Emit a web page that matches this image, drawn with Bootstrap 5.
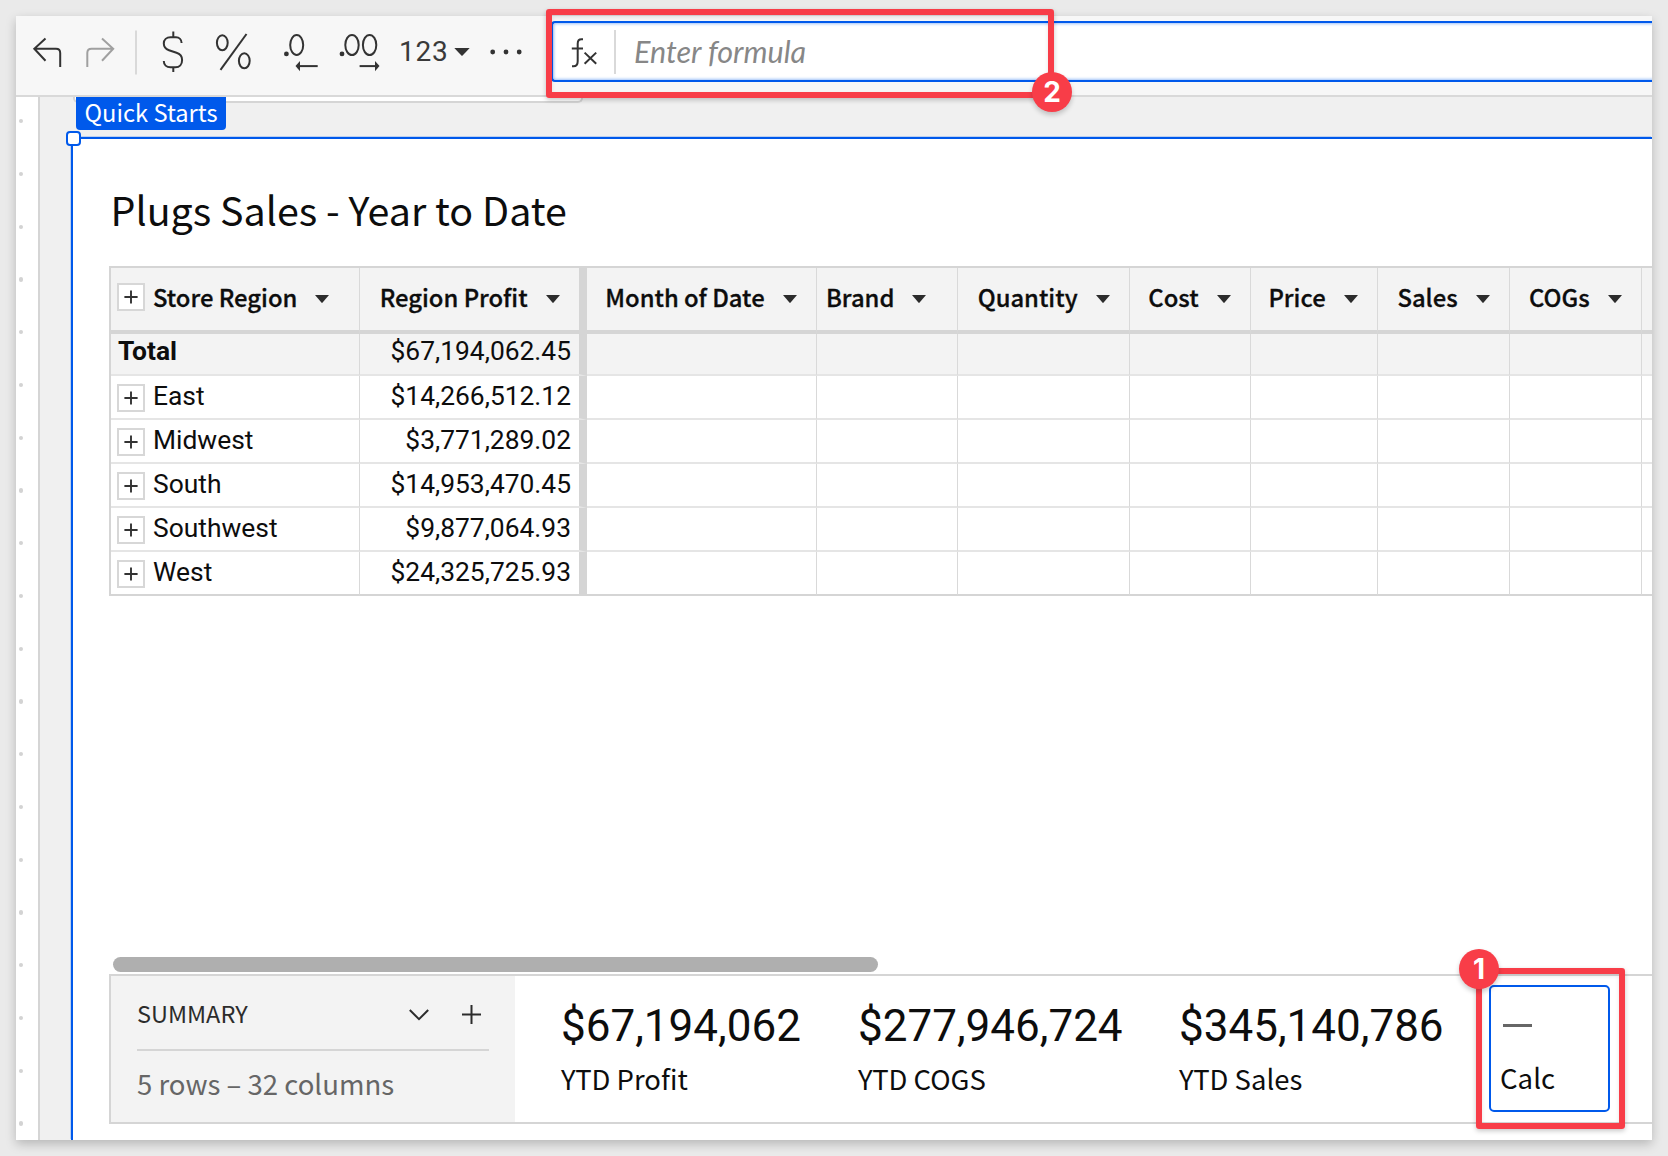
<!DOCTYPE html>
<html lang="en">
<head>
<meta charset="utf-8">
<meta name="viewport" content="width=device-width, initial-scale=1">
<title>Plugs Sales - Year to Date</title>
<link href="https://cdn.jsdelivr.net/npm/bootstrap@5.3.0/dist/css/bootstrap.min.css" rel="stylesheet">
<style>
  :root { --line: #d5d5d5; --blue: #0059eb; --red: #f83d48; --soft: #f3f3f3; }
  body { background: #eaeaea; height: 1156px; padding: 16px; overflow: hidden; color: #0d0d0d;
    font-family: "Noto Sans CJK SC", sans-serif; font-size: 27.5px; line-height: 40px; }
  .app { width: 1636px; height: 1124px; background: #f0f0f0; box-shadow: 0 4px 10px rgba(0,0,0,.22); }
  .clip { overflow: hidden; }
  .num { font-family: Roboto, sans-serif; }
  svg { display: block; flex: none; }

  /* toolbar */
  .toolbar { height: 81px; background: #f7f7f7; border-bottom: 2px solid #d9d9d9; padding-top: 5px; }
  .tools { width: 535px; height: 61px; padding-left: 16px; }
  .fmt { font-size: 28px; letter-spacing: .8px; color: #3a3a3a; margin-left: 18px; line-height: 40px; }
  .fmt-caret { margin-left: 5px; }
  .more { margin-left: 20px; }
  .vr-line { width: 2px; height: 44px; background: #d9d9d9; margin-left: 15px; }
  .formula { height: 61px; background: #fff; border: 2px solid var(--blue); border-right: 0; margin-right: -8px;
    border-radius: 4px 0 0 4px; box-shadow: inset 0 0 3px 1px #9cc0f8; padding-left: 18px; }
  .formula input { border: 0; outline: 0; background: transparent; padding: 0; height: 44px; width: 600px;
    margin: 0 0 2px 18px; font: italic 30.5px/44px "Source Sans Pro", Lato, sans-serif; }
  .formula input::placeholder { color: #878787; opacity: 1; }

  /* canvas */
  .ruler { width: 24px; height: 1043px; background: #fff; border-right: 2px solid var(--line); padding: 22px 0 0 2.6px; }
  .ruler i { display: block; width: 4.4px; height: 4.4px; border-radius: 50%; background: #d3d3d3; margin-bottom: 48.37px; }
  .board { padding-left: 31px; }
  .strip { height: 40px; }
  .prev { left: 2px; top: 0; width: 510px; height: 6px; background: #fff; border: 2px solid var(--line); border-top: 0; border-radius: 0 0 5px 5px; }
  .tag { left: 5px; top: 0; width: 150px; height: 33px; background: var(--blue); color: #fff; font-size: 23.7px;
    line-height: 30px; padding-left: 8.5px; border-radius: 0 0 4px 4px; }
  .frame { border: 2px solid var(--blue); border-width: 2px 0 0 2px; background: #fff; padding-left: 36px; height: 1003px;
    box-shadow: -1px -1px 0 #bcd0f0; }
  .handle { left: -7px; top: -8px; width: 15px; height: 15px; border: 2px solid var(--blue); border-radius: 4px; background: #fff; }
  .sheet-title { font-size: 39.4px; font-weight: 400; line-height: 60px; margin: 0; padding: 40px 0 27px 1.6px; }

  /* pivot table */
  .pivot { table-layout: fixed; width: 1543px; border-collapse: separate; border-spacing: 0;
    border-left: 2px solid var(--line); border-top: 2px solid var(--line); }
  .pivot th, .pivot td { padding: 0; border-right: 1px solid #d9d9d9; }
  .pivot tr > :nth-child(2) { border-right: 8px solid var(--line); }
  .pivot tr > :last-child { border-right: 0; }
  .pivot th { height: 66px; border-bottom: 4px solid var(--line); background: var(--soft); font-size: 23.8px; font-weight: 500; -webkit-text-stroke: .3px #0d0d0d; }
  .pivot th .lbl { line-height: 36px; padding-bottom: 4px; }
  .hd { height: 62px; padding-right: 19.4px; gap: 18px; }
  .pivot td { height: 44px; border-bottom: 2px solid #e5e5e5; background: #fff; font-size: 26.4px; line-height: 36px; }
  .pivot .sum td { height: 42px; background: var(--soft); }
  .pivot .sum .total { padding: 0 0 5px 7px; font-weight: 700; }
  .pivot .last-row td { border-bottom-color: var(--line); }
  .pivot td .lbl { padding-bottom: 2px; }
  .pivot .amt { text-align: right; padding: 0 8px 2px 0; }
  .pivot .sum .amt { padding-bottom: 5px; line-height: 35px; }
  .pivot .sum .total { line-height: 35px; }
  .plus { width: 28px; height: 28px; margin: 1px 8px 0 6px; background: #fff; border: 2px solid #d7d7d7; flex: none; }
  .pivot th .plus { margin: 0 -10px 4px 6px; }
  .brand { padding-left: 9px; }

  .scroll-thumb { width: 765px; height: 15px; border-radius: 7.5px; background: #afafaf; margin: 361px 0 2px 4px; }

  /* summary bar */
  .summary { height: 150px; border: 2px solid var(--line); border-right: 0; background: #fff; }
  .side { width: 404px; background: var(--soft); padding: 17px 26px 0 26px; }
  .side-head { height: 58px; border-bottom: 2px solid var(--line); font-size: 23.5px; color: #2c2c2c; padding-right: 8.5px; }
  .side-note { color: #666; font-size: 27.55px; padding-top: 12px; }
  .add { margin: 12px 0 0 33px; }
  .kpi { padding-top: 24px; }
  .kpi .val { font-size: 44px; line-height: 52px; }
  .kpi .cap { font-size: 27.45px; line-height: 40px; padding-top: 6px; }
  .k1 { margin-left: 46px; width: 297px; }
  .k2 { width: 321px; }
  .k3 { width: 310px; }
  .calc { width: 121px; height: 127px; margin-top: 9px; border: 2px solid var(--blue); border-radius: 5px; padding: 36.5px 0 0 11px; }
  .dash { width: 29px; height: 3.5px; background: #666; margin-left: 1px; }
  .calc .cap { font-size: 27.6px; line-height: 40px; margin-top: 30px; margin-left: -2px; }

  /* annotation marks */
  .mark-box { border: 6px solid var(--red); border-radius: 3px; box-shadow: 0 2px 5px rgba(0,0,0,.22), inset 0 2px 4px rgba(0,0,0,.1); z-index: 5; }
  .mark-dot { width: 40px; height: 40px; border-radius: 50%; background: var(--red); color: #fff; z-index: 6;
    font: 700 28px/40px Inter, sans-serif; text-align: center; box-shadow: 0 3px 5px rgba(0,0,0,.2); }
  .m2 { left: 546px; top: 9px; width: 508px; height: 89px; }
  .d2 { left: 1032px; top: 72px; }
  .m1 { left: 1476px; top: 968px; width: 149px; height: 161px; }
  .d1 { left: 1459px; top: 949px; }
</style>
</head>
<body>
<svg width="0" height="0" class="position-absolute">
  <defs>
    <symbol id="plus" viewBox="0 0 14 14"><path d="M7 .4v13.2M.4 7h13.2" stroke="#333" stroke-width="1.9"/></symbol>
    <symbol id="caret" viewBox="0 0 14 8"><path d="M0 0h14L7.6 7.6q-.6.6-1.2 0z" fill="#2b2b2b"/></symbol>
  </defs>
</svg>

<main class="app d-flex flex-column">
  <header class="toolbar d-flex flex-shrink-0 clip">
    <div class="tools d-flex align-items-center flex-shrink-0">
      <!-- coordinates inside this drawing are page pixels -->
      <svg width="349" height="48" viewBox="32 27.5 349 48" fill="none" stroke="#333" stroke-width="2">
        <path d="M45.5 38 34.3 48.2 45.5 60.3M34.3 48.2H56q4.2 0 4.2 4.2V66.5"/>
        <path d="M102 38 113.2 48.2 102 60.3M113.2 48.2H91.5q-4.2 0-4.2 4.2V66.5" stroke="#a0a0a0"/>
        <path d="M136 30v44" stroke="#d9d9d9"/>
        <path d="M173.300 31v6M173.300 66.500v5M181.600 42.500C181.600 39 179.200 36.800 176 36.800h-5.500c-4 0-6.700 2.600-6.700 6.200 0 3.500 1.700 5.500 5.200 6.700l7.500 2.500c3.700 1.200 5.600 3.600 5.600 7.200 0 4.500-2.600 7.300-6.600 7.300h-5c-4 0-6.700-2.600-6.700-6.300"/>
        <ellipse cx="222.300" cy="42.300" rx="5.400" ry="7.500"/><ellipse cx="244.300" cy="60.300" rx="5.400" ry="7.500"/><path d="M246.500 33.500 220.500 69.300"/>
        <circle cx="286.400" cy="53.400" r="2.400" fill="#333" stroke="none"/><ellipse cx="296.700" cy="44.500" rx="6.500" ry="10"/>
        <path d="M299 65.600h18.700"/><path d="m295.500 65.600 4.500-5.200v10.400z" fill="#333" stroke="none"/>
        <circle cx="342" cy="53.400" r="2.400" fill="#333" stroke="none"/><ellipse cx="352" cy="44.500" rx="6.700" ry="10"/><ellipse cx="369.600" cy="44.500" rx="6.700" ry="10"/>
        <path d="M359.600 65.600H376"/><path d="m379.500 65.600-4.500-5.200v10.400z" fill="#333" stroke="none"/>
      </svg>
      <span class="fmt num">123</span>
      <svg class="fmt-caret" width="16" height="8" viewBox="0 0 16 8"><path d="M.3 0h15.400L8.600 7.400q-.6.600-1.200 0z" fill="#333"/></svg>
      <svg class="more" width="32" height="6" viewBox="0 0 32 6" fill="#333"><circle cx="2.700" cy="3" r="2.400"/><circle cx="16" cy="3" r="2.400"/><circle cx="29.200" cy="3" r="2.400"/></svg>
    </div>
    <label class="formula d-flex align-items-center flex-grow-1">
      <svg width="28" height="32" viewBox="571 37 28 32" fill="none" stroke="#333" stroke-width="2"><path d="M583 40.300h-1.500c-2.600 0-3.800 1.600-3.800 4.400v17.600c0 3.300-1.400 5-4.200 5H572M571.800 49.400h11.200M584.600 53.600l11.600 11.200M596.200 53.600l-11.600 11.200"/></svg>
      <span class="vr-line"></span>
      <input type="text" placeholder="Enter formula">
    </label>
  </header>

  <div class="d-flex flex-grow-1">
    <div class="ruler flex-shrink-0 clip"><i></i><i></i><i></i><i></i><i></i><i></i><i></i><i></i><i></i><i></i><i></i><i></i><i></i><i></i><i></i><i></i><i></i><i></i><i></i><i></i></div>
    <div class="board flex-grow-1 d-flex flex-column">
      <div class="strip position-relative flex-shrink-0">
        <div class="prev position-absolute"></div>
        <div class="tag position-absolute">Quick Starts</div>
      </div>
      <section class="frame flex-shrink-0 position-relative">
        <span class="handle position-absolute"></span>
        <h1 class="sheet-title">Plugs Sales - Year to Date</h1>
        <table class="pivot">
          <colgroup><col style="width:249px"><col style="width:227px"><col style="width:230px"><col style="width:141px"><col style="width:172px"><col style="width:121px"><col style="width:127px"><col style="width:132px"><col style="width:132px"><col style="width:10px"></colgroup>
          <thead>
            <tr>
              <th><div class="hd d-flex align-items-center"><span class="plus d-flex align-items-center justify-content-center"><svg width="14" height="14"><use href="#plus"/></svg></span><span class="lbl">Store Region</span><svg width="14" height="8"><use href="#caret"/></svg></div></th>
              <th><div class="hd d-flex align-items-center justify-content-end"><span class="lbl">Region Profit</span><svg width="14" height="8"><use href="#caret"/></svg></div></th>
              <th><div class="hd d-flex align-items-center justify-content-end"><span class="lbl">Month of Date</span><svg width="14" height="8"><use href="#caret"/></svg></div></th>
              <th><div class="hd brand d-flex align-items-center"><span class="lbl">Brand</span><svg width="14" height="8"><use href="#caret"/></svg></div></th>
              <th><div class="hd d-flex align-items-center justify-content-end"><span class="lbl">Quantity</span><svg width="14" height="8"><use href="#caret"/></svg></div></th>
              <th><div class="hd d-flex align-items-center justify-content-end"><span class="lbl">Cost</span><svg width="14" height="8"><use href="#caret"/></svg></div></th>
              <th><div class="hd d-flex align-items-center justify-content-end"><span class="lbl">Price</span><svg width="14" height="8"><use href="#caret"/></svg></div></th>
              <th><div class="hd d-flex align-items-center justify-content-end"><span class="lbl">Sales</span><svg width="14" height="8"><use href="#caret"/></svg></div></th>
              <th><div class="hd d-flex align-items-center justify-content-end"><span class="lbl">COGs</span><svg width="14" height="8"><use href="#caret"/></svg></div></th>
              <th></th>
            </tr>
          </thead>
          <tbody class="num">
            <tr class="sum"><td class="total">Total</td><td class="amt">$67,194,062.45</td><td></td><td></td><td></td><td></td><td></td><td></td><td></td><td></td></tr>
            <tr><td><div class="d-flex align-items-center"><span class="plus d-flex align-items-center justify-content-center"><svg width="14" height="14"><use href="#plus"/></svg></span><span class="lbl">East</span></div></td><td class="amt">$14,266,512.12</td><td></td><td></td><td></td><td></td><td></td><td></td><td></td><td></td></tr>
            <tr><td><div class="d-flex align-items-center"><span class="plus d-flex align-items-center justify-content-center"><svg width="14" height="14"><use href="#plus"/></svg></span><span class="lbl">Midwest</span></div></td><td class="amt">$3,771,289.02</td><td></td><td></td><td></td><td></td><td></td><td></td><td></td><td></td></tr>
            <tr><td><div class="d-flex align-items-center"><span class="plus d-flex align-items-center justify-content-center"><svg width="14" height="14"><use href="#plus"/></svg></span><span class="lbl">South</span></div></td><td class="amt">$14,953,470.45</td><td></td><td></td><td></td><td></td><td></td><td></td><td></td><td></td></tr>
            <tr><td><div class="d-flex align-items-center"><span class="plus d-flex align-items-center justify-content-center"><svg width="14" height="14"><use href="#plus"/></svg></span><span class="lbl">Southwest</span></div></td><td class="amt">$9,877,064.93</td><td></td><td></td><td></td><td></td><td></td><td></td><td></td><td></td></tr>
            <tr class="last-row"><td><div class="d-flex align-items-center"><span class="plus d-flex align-items-center justify-content-center"><svg width="14" height="14"><use href="#plus"/></svg></span><span class="lbl">West</span></div></td><td class="amt">$24,325,725.93</td><td></td><td></td><td></td><td></td><td></td><td></td><td></td><td></td></tr>
          </tbody>
        </table>
        <div class="scroll-thumb"></div>
        <div class="summary d-flex">
          <div class="side flex-shrink-0">
            <div class="side-head d-flex align-items-start">
              <span class="me-auto">SUMMARY</span>
              <svg class="mt-3" width="20" height="12" viewBox="0 0 20 12" fill="none" stroke="#2c2c2c" stroke-width="2"><path d="m.8 1 9.200 9.200L19.200 1"/></svg>
              <svg class="add" width="19" height="19" viewBox="0 0 19 19" stroke="#2c2c2c" stroke-width="2"><path d="M9.500 0v19M0 9.500h19"/></svg>
            </div>
            <div class="side-note">5 rows – 32 columns</div>
          </div>
          <div class="kpi k1"><div class="val num">$67,194,062</div><div class="cap">YTD Profit</div></div>
          <div class="kpi k2"><div class="val num">$277,946,724</div><div class="cap">YTD COGS</div></div>
          <div class="kpi k3"><div class="val num">$345,140,786</div><div class="cap">YTD Sales</div></div>
          <div class="calc"><div class="dash"></div><div class="cap">Calc</div></div>
        </div>
      </section>
    </div>
  </div>
</main>

<!-- numbered callouts -->
<div class="mark-box m2 position-absolute"></div>
<div class="mark-dot d2 position-absolute">2</div>
<div class="mark-box m1 position-absolute"></div>
<div class="mark-dot d1 position-absolute">1</div>
<script src="https://cdn.jsdelivr.net/npm/bootstrap@5.3.0/dist/js/bootstrap.bundle.min.js"></script>
</body>
</html>
